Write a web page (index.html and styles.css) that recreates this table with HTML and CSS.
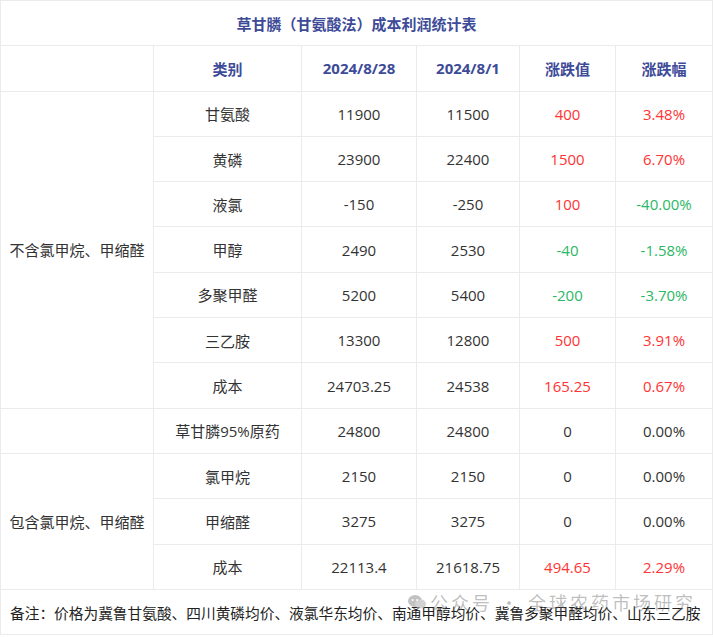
FILE: index.html
```html
<!DOCTYPE html>
<html lang="zh">
<head>
<meta charset="utf-8">
<link rel="stylesheet" href="styles.css">
</head>
<body>
<div class="wrap">
<table class="tbl">
  <colgroup>
    <col class="c1"><col class="c2"><col class="c3"><col class="c4"><col class="c5"><col class="c6">
  </colgroup>
  <tr><td class="title" colspan="6">草甘膦（甘氨酸法）成本利润统计表</td></tr>
  <tr class="head"><td></td><td>类别</td><td>2024/8/28</td><td>2024/8/1</td><td>涨跌值</td><td>涨跌幅</td></tr>
  <tr><td rowspan="7" class="grp">不含氯甲烷、甲缩醛</td><td>甘氨酸</td><td>11900</td><td>11500</td><td class="up">400</td><td class="up">3.48%</td></tr>
  <tr><td>黄磷</td><td>23900</td><td>22400</td><td class="up">1500</td><td class="up">6.70%</td></tr>
  <tr><td>液氯</td><td>-150</td><td>-250</td><td class="up">100</td><td class="down">-40.00%</td></tr>
  <tr><td>甲醇</td><td>2490</td><td>2530</td><td class="down">-40</td><td class="down">-1.58%</td></tr>
  <tr><td>多聚甲醛</td><td>5200</td><td>5400</td><td class="down">-200</td><td class="down">-3.70%</td></tr>
  <tr><td>三乙胺</td><td>13300</td><td>12800</td><td class="up">500</td><td class="up">3.91%</td></tr>
  <tr><td>成本</td><td>24703.25</td><td>24538</td><td class="up">165.25</td><td class="up">0.67%</td></tr>
  <tr><td></td><td>草甘膦95%原药</td><td>24800</td><td>24800</td><td>0</td><td>0.00%</td></tr>
  <tr><td rowspan="3" class="grp">包含氯甲烷、甲缩醛</td><td>氯甲烷</td><td>2150</td><td>2150</td><td>0</td><td>0.00%</td></tr>
  <tr><td>甲缩醛</td><td>3275</td><td>3275</td><td>0</td><td>0.00%</td></tr>
  <tr><td>成本</td><td>22113.4</td><td>21618.75</td><td class="up">494.65</td><td class="up">2.29%</td></tr>
  <tr><td class="note" colspan="6">备注：价格为冀鲁甘氨酸、四川黄磷均价、液氯华东均价、南通甲醇均价、冀鲁多聚甲醛均价、山东三乙胺</td></tr>
</table>
<div class="watermark">
  <svg class="wm-icon" width="18" height="14" viewBox="0 0 18 14"><ellipse cx="7" cy="6" rx="7" ry="6" fill="#9a9a9a"/><ellipse cx="12.5" cy="9" rx="5.5" ry="4.6" fill="#b5b5b5"/><circle cx="4.6" cy="5" r="1" fill="#fff"/><circle cx="9.2" cy="5" r="1" fill="#fff"/></svg>
  <span>公众号 · 全球农药市场研究</span>
</div>
</div>
</body>
</html>
```
FILE: styles.css
```css
html, body { margin: 0; padding: 0; background: #fff; }
.wrap { position: relative; width: 713px; height: 637px; overflow: hidden; }
.tbl {
  border-collapse: collapse;
  table-layout: fixed;
  width: 712px;
  font-family: "Open Sans", "Noto Sans CJK SC", sans-serif;
  font-size: 15px;
  color: #333;
}
.c1 { width: 153px; }
.c2 { width: 148px; }
.c3 { width: 115px; }
.c4 { width: 103px; }
.c5 { width: 96px; }
.c6 { width: 97px; }
.tbl td {
  border: 1px solid #ebebeb;
  height: 44.3px;
  padding: 0;
  text-align: center;
  vertical-align: middle;
  white-space: nowrap;
}
.title, .head td { color: #3d4b98; font-weight: bold; }
.up { color: #ff3333; }
.down { color: #2bb765; }
.tbl td.note { text-align: left; padding-left: 9px; font-size: 14.7px; color: #222; }
.watermark {
  position: absolute;
  left: 408px;
  top: 592px;
  display: flex;
  align-items: center;
  gap: 4px;
  font-family: "Noto Sans CJK SC", sans-serif;
  font-size: 18px;
  letter-spacing: 3px;
  color: rgba(110, 110, 110, 0.45);
  line-height: 20px;
}
.wm-icon { opacity: 0.6; }
```
